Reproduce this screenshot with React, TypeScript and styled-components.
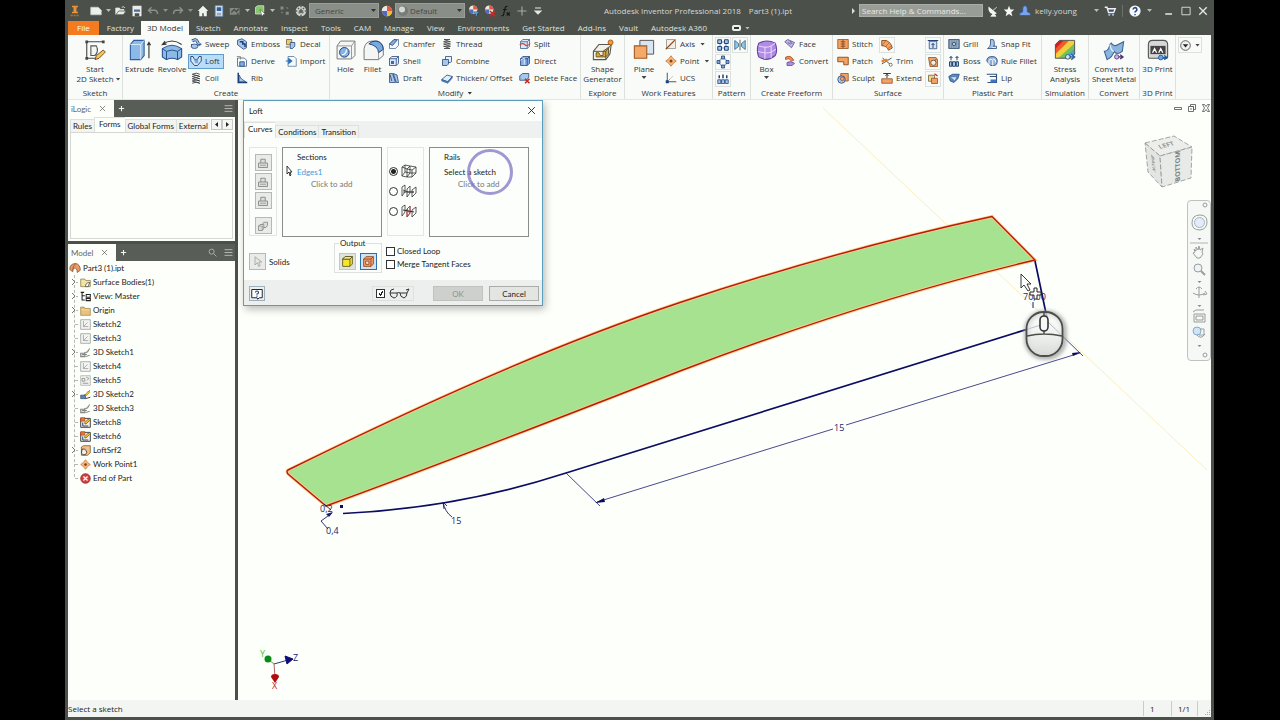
import React from "react";
import styled, { createGlobalStyle, css } from "styled-components";

const chrome = "#4c504b";
const paper = "#fcfffa";
const line = "#dde1de";
const ui = '"Open Sans", "Noto Sans", sans-serif';
const tahoma = 'Lato, "DejaVu Sans Condensed", sans-serif';
const B = "#1f3f78";
const LB = "#a6c6ec";
const O = "#f3a264";
const DO = "#8c4a1c";

const Global = createGlobalStyle`
  *, *::before, *::after { box-sizing: border-box; }
  body { margin: 0; background: #000; font: 8px/10px ${ui}; color: #333; }
  button, input, select { font: inherit; color: inherit; margin: 0; padding: 0; border: 0; background: none; border-radius: 0; }
  h1, h2, ul, fieldset, legend, p { margin: 0; padding: 0; font: inherit; border: 0; list-style: none; }
  svg { display: block; flex: none; overflow: visible; }
`;

/* ---------- icons ---------- */

const box3d = (f: string, s: string) => (
  <>
    <path d="M2 5 5 2h9v9l-3 3H2z" fill={f} stroke={s} />
    <path d="M2 5h9v9M11 5l3-3" fill="none" stroke={s} />
  </>
);

const glyphs: Record<string, React.ReactNode> = {
  logo: <><path d="M4 1h8v2H10v6h2v2H4V9h2V3H4z" fill="#e8923a" /><path d="M2 14h12" stroke="#c4691c" strokeWidth="2" strokeDasharray="3 1" /></>,
  newFile: <path d="M1 3h10l4 4v6H1z" fill="#eef0ee" stroke="#c9ccc9" />,
  open: <><path d="M1 13V4h5l1 2h5v2" fill="#e8ebe8" stroke="#e8ebe8" /><path d="M1 13 5 8h10l-4 5z" fill="#e8ebe8" stroke="#4c504b" /><path d="M9 3q3-2 4 1" stroke="#fff" fill="none" /></>,
  save: <><path d="M2 1h12v14H2z" fill="#e9ecea" /><path d="M4 6h8v3H4z" fill="#4d6c97" /><path d="M5 11h6v4H5z" fill="#4c504b" /></>,
  undo: <path d="M6 3 2 7l4 4M2 7h8q4 0 4 5" fill="none" stroke="#8b8f8a" strokeWidth="2" />,
  redo: <path d="M10 3l4 4-4 4M14 7H6q-4 0-4 5" fill="none" stroke="#8b8f8a" strokeWidth="2" />,
  home: <path d="M8 1 15 8h-2v7H9v-4H7v4H3V8H1z" fill="#f1f3f1" />,
  sheet: <><path d="M3 1h10v14H3z" fill="#dfe9f4" stroke="#6f96c4" /><path d="M5 3h6v5H5z" fill="#2f5f9e" /><path d="M5 11h6M5 13h6" stroke="#6b7b8b" /></>,
  team: <><path d="M1 4h13v9H1z" fill="#838883" /><path d="m3 10 4-4 3 3 3-4M10 14l3-3" stroke="#4c504b" strokeWidth="2" fill="none" /></>,
  pick: <><path d="M2 3l3-2h8v8l-2 3H2z" fill="#86c66c" stroke="#d9ecd2" /><path d="m8 6 7 6-3 1-1 3z" fill="#fff" stroke="#333" strokeWidth=".6" /></>,
  dots: <><path d="M2 2h4v4H2zM9 9h4v4H9z" fill="#858a85" /><path d="M3 9l2 2M10 3l2 2" stroke="#747974" strokeWidth="2" /></>,
  ball: <><circle cx="8" cy="8" r="7" fill="#ced2ce" /><path d="M4 4l8 8M12 4l-8 8M8 1v14M1 8h14" stroke="#5a5e5a" strokeDasharray="2 2" strokeWidth="2" /></>,
  wheel: <><circle cx="8" cy="8" r="7" fill="#f4d44a" /><path d="M8 8 1 8a7 7 0 0 1 7-7z" fill="#e8e8ea" /><path d="M8 8V1a7 7 0 0 1 7 7z" fill="#e2564c" /><path d="M8 8H1a7 7 0 0 0 7 7z" fill="#5068c8" /><path d="M8 8v7a7 7 0 0 0 7-7z" fill="#ecc03c" /></>,
  wheelT: <><circle cx="7" cy="6" r="5.5" fill="#f1ead0" /><path d="M7 6V.5A5.5 5.5 0 0 1 12.500 6z" fill="#e2564c" /><path d="M7 6H1.500a5.500 5.500 0 0 0 5.500 5.500z" fill="#5068c8" /><path d="M7 9h8l-3 3v3h-2v-3z" fill="#5aa7e4" stroke="#234" strokeWidth=".5" /></>,
  wheelX: <><circle cx="7" cy="6" r="5.5" fill="#f1ead0" /><path d="M7 6V.5A5.5 5.5 0 0 1 12.500 6z" fill="#e2564c" /><path d="M7 6H1.500a5.500 5.500 0 0 0 5.500 5.500z" fill="#5068c8" /><path d="m8 8 7 7M15 8l-7 7" stroke="#d32626" strokeWidth="2.200" /></>,
  fx: <path d="M10 2Q7 1 6.500 5L5 12q-.5 3-3 2M4 6h5M9 10l4 4M13 10l-4 4" fill="none" stroke="#151515" strokeWidth="1.500" />,
  plus: <path d="M8 2v12M2 8h12" stroke="#a8aca8" strokeWidth="1.400" />,
  more: <path d="M4 4h8M4 8h8l-4 4z" stroke="#e6e8e6" fill="#e6e8e6" strokeWidth="1.400" />,
  dish: <><path d="M2 2q-1 8 5 10 4 1 6-1z" fill="#f3f5f3" /><path d="M8 7l5-4M5 15h7l-3-4z" fill="#f3f5f3" stroke="#f3f5f3" /></>,
  star: <path d="m8 1 2 5h5l-4 3.500 1.500 5.500L8 12l-4.500 3L5 9.500 1 6h5z" fill="#f5f7f5" />,
  user: <><path d="M5 9V5a3 4 0 0 1 6 0v4l4 2v3H1v-3z" fill="#7aa3ea" stroke="#31559b" /></>,
  cart: <><path d="M1 3h3l2 7h7l2-5H5" fill="none" stroke="#eef" strokeWidth="1.800" /><circle cx="7" cy="13" r="1.500" fill="#9bc" /><circle cx="12" cy="13" r="1.500" fill="#9bc" /></>,
  help: <><circle cx="8" cy="8" r="7.500" fill="#f5f8fb" /><path d="M5.500 6a2.500 2.500 0 1 1 3.500 2.300q-1 .4-1 1.700M8 12v1.500" stroke="#20427e" strokeWidth="2" fill="none" /></>,
  min: <path d="M3 12h9" stroke="#e6e8e6" strokeWidth="2" />,
  max: <path d="M2.500 3h11v10h-11z" stroke="#d4d7d4" fill="none" strokeWidth="1.300" />,
  close: <path d="m3 3 10 10M13 3 3 13" stroke="#e6e8e6" strokeWidth="1.800" />,
  sketch2d: <><path d="M2 2h12M2 2v12M2 14h8" stroke="#444" strokeWidth=".8" fill="none" /><path d="M1 1h2v2H1zM13 1h2v2h-2zM1 13h2v2H1z" fill="#444" /><path d="M5 12V5h4q2 4-1 7z" fill="#f3f5f5" stroke="#555" strokeWidth=".8" /><path d="m8 15 1-3 5-4 1.500 1.500L11 14z" fill="#f5c45d" stroke="#77501d" strokeWidth=".7" /></>,
  extrude: <><path d="M1 4 3.500 1H11v11l-2.500 3H1z" fill="#8db9e6" stroke="#2f5e9c" strokeWidth=".8" /><path d="M1 4h7.500v11M8.500 4 11 1" fill="none" stroke="#d9ebfb" strokeWidth=".7" /><path d="M14.500 14V3M13.300 4.500l1.200-2 1.200 2" stroke="#333" strokeWidth=".8" fill="none" /></>,
  revolve: <><path d="M1 7q7-5 14 0v6l-3 2q-4-2-8 0l-3-2z" fill="#8db9e6" stroke="#28528e" strokeWidth=".8" /><path d="M1 7l3 2q4-2 8 0l3-2M4 9v6M12 9v6" fill="none" stroke="#28528e" strokeWidth=".7" /><path d="M1 4q7-5 14 0M3 1.500 1 4l3-.3" stroke="#333" fill="none" strokeWidth=".8" /></>,
  sweep: <><path d="M3 4q5-4 7 1t4 2" fill="none" stroke={B} strokeWidth="4" /><path d="M3 4q5-4 7 1t4 2" fill="none" stroke={LB} strokeWidth="2" /><ellipse cx="6" cy="11" rx="4.500" ry="3" fill={LB} stroke={B} /><path d="M2 8v3M10 10l4-2" stroke={B} /></>,
  loft: <><path d="M1 2h3l2 4h4l2-4h3v6l-5 6H6L1 8z" fill="#d8e9f9" stroke={B} strokeWidth="1.200" /><path d="M5 6h6v5H7z" fill="#7ba8da" /></>,
  coil: <path d="M3 3q6-3 10 0M3 6q6-3 10 0M3 9q6-3 10 0M3 12q6-3 10 0M3 15q6-3 10 0M3 3l10 3M3 6l10 3M3 9l10 3M3 12l10 3" stroke="#333" fill="none" strokeWidth="1.100" />,
  emboss: <><path d="M2 3l6-2 6 4v8l-4 2-8-6z" fill={LB} stroke={B} /><path d="M5 5h4v3h3v4" stroke={B} strokeWidth="2" fill="none" /></>,
  derive: <><path d="M2 4h9l3 3v8H2z" fill="#f7fafc" stroke="#35557f" /><path d="M5 9h6v6H5z" fill="#7fadde" stroke={B} /><path d="M1 2h5v4" stroke="#777" fill="none" /></>,
  rib: <><path d="M3 1v13h12" stroke={B} strokeWidth="2" fill="none" /><path d="M4 4q2 6 9 9H4z" fill={LB} stroke={B} /></>,
  decal: <><path d="M2 2h7v7H2z" fill="#eecb78" stroke="#6c5a2a" /><path d="M7 6h6v5l-3 3H7z" fill={LB} stroke={B} /><path d="M1 12h5" stroke="#333" /></>,
  import: <><path d="M4 2h8l3 3v10H4z" fill="#f7fbfd" stroke="#4b7094" /><path d="M1 8h6M5 5l4 3-4 3z" fill="#2b6fb5" stroke="#2b6fb5" strokeWidth="1.500" /></>,
  hole: <><path d="M1.500 5 4 1.500h10.500V12L12 14.500H1.500z" fill="#f4f5f4" stroke="#777" strokeWidth=".7" /><path d="M1.500 5H12v9.500M12 5l2.500-3.500" fill="none" stroke="#888" strokeWidth=".6" /><circle cx="6.800" cy="9.700" r="3.500" fill="#84b3e4" stroke={B} strokeWidth=".7" /><path d="M5 11.500q3 0 3.500-4" stroke="#fff" fill="none" strokeWidth=".8" /></>,
  fillet: <><path d="M1.500 15V7q1-5.500 6-5.500h4q4 2 4 6V12L12 15z" fill="#f4f5f4" stroke="#777" strokeWidth=".7" /><path d="M5 3.500q2-2 5-2 5 .5 5.500 6L12 10Q12 5 5 3.500z" fill="#78aae0" stroke={B} strokeWidth=".7" /><path d="M12 10v5" stroke="#888" strokeWidth=".6" /></>,
  chamfer: <><path d="M2 14V8l6-6h6v8l-4 4z" fill="#f4f7fa" stroke="#47678f" /><path d="M2 8l6-6 4 1-6 7z" fill="#7fadde" stroke={B} /></>,
  shell: <>{box3d("#dceafa", B)}<path d="M4 8h4v4H4z" fill="#3d6aa6" /></>,
  draft: <><path d="M2 2h4l4 12H2zM7 2l5 2 2 10h-3z" fill={LB} stroke={B} /><path d="M3 4l2 8" stroke="#333" /></>,
  thread: <path d="M4 2h8M3 5h10M3 8h10M3 11h10M4 14h8M4 2l8 3M4 5l8 3M4 8l8 3M4 11l8 3" stroke="#444" strokeWidth="1.200" />,
  combine: <><path d="M6 2h8v7l-2 1H6z" fill="#e9f2fb" stroke={B} /><path d="M2 6h8v6l-2 2H2z" fill={LB} stroke={B} /></>,
  thicken: <><path d="M1 10 8 4l7 2-6 7z" fill="#def" stroke={B} /><path d="M1 10v2l8 3 6-7V6l-6 7z" fill="#4d93d6" stroke={B} strokeWidth=".7" /></>,
  split: <>{box3d("#dce8f5", "#2f5b92")}<path d="M1 9q4-3 7 0t7-2" fill="none" stroke="#cf4a3c" strokeWidth="1.500" /></>,
  direct: <>{box3d("#7fb0e6", B)}<path d="M2 7l5-3v9" stroke="#fff" fill="none" /></>,
  delface: <><path d="M1 5 5 2h8v5l-3 4H1z" fill={LB} stroke={B} /><path d="m8 9 6 6M14 9l-6 6" stroke="#c6261f" strokeWidth="2" /></>,
  shapegen: <><path d="M1 9 5 4h9l-1 7-3 4H1z" fill="#f3f1e5" stroke="#555" strokeWidth=".8" /><path d="M3 13V10h2l1 2h2v-3l4-3v5l-2 2z" fill="#d9a93d" stroke="#6b5720" strokeWidth=".7" /><path d="M1 9h9l4-5M10 9v6" stroke="#555" fill="none" strokeWidth=".7" /><circle cx="13.500" cy="2.500" r="1.800" fill="#f59b34" stroke="#a04f10" strokeWidth=".6" /></>,
  plane: <><path d="M5 1h10v10H5z" fill="#d8e4ef" stroke="#555" strokeWidth=".7" /><path d="M1 5h9v9H1z" fill="#f3a967" stroke="#a45a20" strokeWidth=".8" /></>,
  axis: <><path d="M2 2h12v12H2z" fill="#f5efe8" stroke="#888" /><path d="M1 15 13 3" stroke={DO} strokeWidth="1.500" /></>,
  point: <><path d="m8 1 3 4 4 3-4 3-3 4-3-4-4-3 4-3z" fill="#f6b880" stroke="#c46a25" /><circle cx="8" cy="8" r="2" fill="#8e3f10" /></>,
  ucs: <><path d="M3 1v12h12" stroke="#444" fill="none" strokeWidth="1.200" /><path d="M3 13l7-7" stroke="#777" strokeDasharray="2 1" /><path d="M1 11h4v4H1z" fill={B} /></>,
  rect: <><path d="M4 4h8v8H4z" fill="none" stroke="#5279af" /><path d="M1 1h5v5H1zM10 1h5v5h-5zM1 10h5v5H1zM10 10h5v5h-5z" fill="#a6c6ec" stroke={B} strokeWidth="1.300" /></>,
  mirror: <><path d="M1 2l5 4v4l-5 4zM15 2l-5 4v4l5 4z" fill="#8fcbe6" stroke="#33597c" /><path d="M8 1v14" stroke="#333" /></>,
  circ: <><circle cx="8" cy="8" r="5" fill="none" stroke="#5279af" /><path d="M6 0h4v4H6zM6 12h4v4H6zM0 6h4v4H0zM12 6h4v4h-4z" fill="#77a5d9" stroke={B} /></>,
  skpat: <><path d="M1 9h4v5H1zM6 9h4v5H6zM11 9h4v5h-4z" fill={LB} stroke={B} /><path d="M3 7V3M8 7V2M13 7V3" stroke={B} strokeWidth="2" /></>,
  freebox: <><path d="M2 3q6-3 12 0 2 5 0 9-6 5-12 1-2-5 0-10z" fill="#b08ce4" stroke="#6a44a4" strokeWidth=".8" /><path d="M2 5q6 2 9 0l3-2M11 5v9M6.500 5.500v9M1.500 9q6 2 9.500.5l3.500-2" stroke="#ecdcff" fill="none" strokeWidth=".7" /></>,
  face: <><path d="m1 5 4-3 9 4-4 7z" fill="#c8b2ea" stroke="#494c86" /><path d="m5 6 4 2M8 4l3 4" stroke="#494c86" /></>,
  convert: <><path d="M2 3q7-4 11 4l-3 1Q7 3 2 6z" fill="#f08a52" stroke="#a2471c" /><path d="M4 10q5-3 10 1l-3 3H4z" fill="#b08ce4" stroke="#5c4392" /></>,
  stitch: <><path d="M1 2h14v12H1z" fill={O} stroke={DO} /><path d="M8 2v12M5 5h6M5 8h6M5 11h6" stroke={DO} strokeWidth="1.200" /></>,
  patch: <path d="M1 3h14v10H9V9H1z" fill={O} stroke={DO} strokeWidth="1.200" />,
  sculpt: <><path d="M5 2h10v10H5z" fill={O} stroke={DO} /><circle cx="6" cy="10" r="5" fill={LB} stroke={B} /><circle cx="7" cy="9" r="2.500" fill={O} stroke={DO} /></>,
  ruled: <><path d="M1 2h6q7 3 8 10l-5 3Q8 9 1 9z" fill={O} stroke={DO} strokeWidth="1.200" /><path d="M1 9 7 2M6 10l5-5M9 13l5-4" stroke={DO} strokeWidth=".7" /></>,
  trim: <><path d="M1 12 14 4M2 4l11 9" stroke="#555" strokeWidth="1.300" /><path d="M1 9q5-4 8-1" stroke="#e28432" strokeWidth="3" fill="none" /><circle cx="13" cy="13" r="2" stroke="#555" fill="#fff" /></>,
  extend: <><path d="M1 9h14v6H1z" fill={O} stroke={DO} /><path d="M3 2h10M8 8V3M6 5l2-2 2 2" stroke="#333" fill="none" strokeWidth="1.300" /></>,
  rep: <><path d="M3 3h10v10H3z" fill="#d6e5f3" stroke={B} /><path d="M1 2h14M8 12V6M6 8l2-2 2 2" stroke={B} strokeWidth="1.300" fill="none" /></>,
  repair: <><path d="M2 2h10l2 3v9H4z" fill={O} stroke={DO} /><circle cx="8.500" cy="9" r="3.500" fill="#f7ece0" stroke="#444" /><path d="M10 6l3-2" stroke="#444" /></>,
  copyobj: <><path d="M2 3h8v8H2z" fill="#edd69a" stroke="#6c5a2a" /><path d="M6 7h8v7H6z" fill={O} stroke={DO} /><path d="m10 1 4 3" stroke="#c33" strokeWidth="2" /></>,
  grill: <><path d="M1 2h14v12H1z" fill="#7690ad" stroke="#2f4764" /><path d="M3 4h10v8H3z" fill="none" stroke="#d2e2f2" strokeDasharray="1.500 1.500" /><circle cx="8" cy="8" r="2" fill="#f0f5fa" stroke="#234" /></>,
  boss: <path d="M2 15V9h3v6zM11 15V9h3v6zM6 15V9h4v6zM4 7V2M2 4l2-2 2 2M12 7V2M10 4l2-2 2 2" fill={LB} stroke="#26446f" strokeWidth="1.300" />,
  rest: <><path d="M1 6 6 3h9l-2 6-5 5-5-2z" fill="#5b88bd" stroke={B} /><path d="M4 7h7l-2 4z" fill="#d9e8f7" /></>,
  snap: <><path d="M6 2q5-1 5 3v6q0 3-3 3H2q4-2 4-6z" fill={LB} stroke={B} /><path d="M9 11h5v3H7" fill="#dcebfa" stroke={B} /></>,
  rfillet: <><path d="M1 8q0-6 7-6t7 6-5 6H6Z" fill="#8eaed4" stroke={B} /><path d="M4 13V7q2-3 5 0v7M9 5q4 0 4 5" stroke="#fff" fill="none" strokeWidth="1.300" /></>,
  lip: <><path d="M1 3h13v3H5M14 6v8H2" fill="none" stroke="#334f7a" strokeWidth="1.500" /><path d="M6 10h8v4H6z" fill="#3e76c0" /></>,
  stress: <><path d="M1 4 4 1h11v10l-3 3H1z" fill="#f2cf3b" /><path d="M6 14 15 5v6l-3 3z" fill="#4aa2d8" /><path d="M4 1h7L1 11V4z" fill="#ee5a2c" /><path d="M1 4 4 1h3L1 7z" fill="#cf2020" /><path d="M3 14 15 3v4l-8 7z" fill="#6cc45a" /><path d="M1 4 4 1h11v10l-3 3H1z" fill="none" stroke="#555" strokeWidth=".7" /><path d="M9 13h5M12.500 11l2.500 2-2.500 2" stroke="#2d62a4" strokeWidth="1" fill="#fff" /><circle cx="10" cy="13" r="1.700" fill="#cfe2f5" stroke="#2d4c7a" strokeWidth=".6" /></>,
  sheetm: <><path d="M1 9q3 0 4-5l1-1q2 3 5 1l4-2-1 7q-4 3-6 0-1 4-5 6z" fill="#8db4dd" stroke="#3c6693" strokeWidth=".8" /><path d="M5 4q1 5 3 5" stroke="#dceafa" fill="none" /><path d="M9 13h5M12.500 11.500l2 1.500-2 1.500" stroke="#4c3375" fill="none" /><circle cx="10" cy="13" r="1.600" fill="#cdb3ec" stroke="#4c3375" strokeWidth=".6" /></>,
  print3d: <><path d="M1 4q0-3 3-3h8q3 0 3 3v9q0 1-1 1H2q-1 0-1-1z" fill="#d6d8d7" stroke="#555" strokeWidth=".8" /><path d="M2.500 5h11v6h-11z" fill="#444" /><path d="m4 10 1.500-3L7 10M8.500 10 10 7l1.500 3" stroke="#fff" fill="none" strokeWidth=".9" /><path d="M9 13.500h5M12.500 12l2 1.500-2 1.500" stroke="#1f5ea4" fill="none" /><circle cx="10" cy="13.500" r="1.700" fill="#5ea9ea" stroke="#1f4e8a" strokeWidth=".6" /></>,
  drop: <><circle cx="8" cy="8" r="7" fill="#f0f2f0" stroke="#444" strokeWidth="1.200" /><path d="M4 6h8l-4 5z" fill="#222" /></>,
  part: <><path d="M1 10q0-8 8-8 6 1 6 9l-4 3q0-6-4-6-2 1-2 5z" fill="#e99a66" stroke="#82502f" /><path d="M9 2q-4 3-4 9" stroke="#82502f" fill="none" /></>,
  surf: <><path d="M1 3h6l1 2h7v9H1z" fill="#f1e4a4" stroke="#7d7440" /><path d="M8 14q0-6 6-6l-2 6z" fill="#fff" stroke="#333" /></>,
  view: <path d="M1 2h5M3 2v11h4M3 7h4M9 5h6v4H9zM9 11h6v3H9z" fill="#fff" stroke="#222" strokeWidth="1.500" />,
  folder: <><path d="M1 3h5l1 2h8v10H1z" fill="#e9c37e" stroke="#9d7a3e" /><path d="M2 7h12" stroke="#f9e4b8" /></>,
  sk: <><path d="M1 1h14v14H1z" fill="#f3f4f3" stroke="#8e928e" /><path d="M5 3v8h7M5 11l6-6" stroke="#8e928e" fill="none" /></>,
  skc: <><path d="M1 1h14v14H1z" fill="#f1f2f1" stroke="#a4a8a4" /><path d="M3 5h4v4H3zM9 3l4 2-3 3M4 12h8" stroke="#8e928e" fill="none" strokeWidth="1.300" /></>,
  s3: <path d="M1 9h6v5H1zM8 14l6-2M6 8q5 2 8-6M3 11h7" stroke="#858985" fill="#d9dbd9" strokeWidth="1.500" />,
  s3c: <><path d="M1 9h7v5H1z" fill="#5f86b4" stroke="#27466f" /><path d="M6 9q5 0 8-7M8 14l7-2" stroke="#333" fill="none" strokeWidth="1.300" /><path d="m7 9 5-6 2 2-5 5z" fill="#f3c32e" stroke="#7c5b10" strokeWidth=".6" /></>,
  skx: <><path d="M1 2h14v13H1z" fill="#f3efe6" stroke="#333" strokeWidth="1.300" /><path d="M1 1h6v5H1z" fill="#e07a3a" stroke="#b5431f" /><path d="M4 13V8M4 13h8" stroke="#2a4f80" strokeWidth="1.500" fill="none" /><path d="m7 8 5-5 2 2-5 5H7z" fill="#f0c33b" stroke="#6b4a12" /></>,
  loftsrf: <><path d="M2 3 5 1h10v10l-4 4H2z" fill="#f6bf86" stroke="#6e4524" /><path d="M3 6q4-1 6 2t-1 6q-4 1-6-2z" fill="#f3efe9" stroke="#333" strokeWidth="1.200" /></>,
  end: <><circle cx="8" cy="8" r="7" fill="#d43f3f" stroke="#7d1d1d" /><path d="m5 5 6 6M11 5l-6 6" stroke="#fff" strokeWidth="1.800" /></>,
  solid: <>{box3d("#f7e52c", "#565016")}<path d="M2 5 5 2h9l-3 3z" fill="#fdf9a6" stroke="#565016" /></>,
  surface: <>{box3d("#f2a06b", "#8c3f1c")}<path d="M4.500 7.500h4v4h-4z" fill="#fbe3d2" stroke="#8c3f1c" /></>,
  sec: <><path d="M2 14V8h12v6zM5 8V3h6v5" fill="#dcdedc" stroke="#8c8f8c" strokeWidth="1.300" /><path d="M4 11h8" stroke="#8c8f8c" /></>,
  multi: <><path d="m2 8 2-2h5v5l-2 3H2zM7 6l2-3h5v4l-2 3H9" fill="#dcdedc" stroke="#8c8f8c" strokeWidth="1.200" /><path d="M2 8h5v6" stroke="#8c8f8c" fill="none" /></>,
  arrow: <path d="M4 1v11l3-3 2 5 2-1-2-5h4z" fill="#e6e8e6" stroke="#999c99" />,
  search: <path d="M10 10l5 5M6.500 11a4.500 4.500 0 1 0 0-9 4.500 4.500 0 0 0 0 9z" stroke="#c4c7c4" fill="none" strokeWidth="1.300" />,
  menu: <path d="M1 3h14M1 8h14M1 13h14" stroke="#c4c7c4" strokeWidth="1.500" />,
  add: <path d="M8 2v12M2 8h12" stroke="#f2f4f2" strokeWidth="2.500" />,
  x: <path d="m2 2 12 12M14 2 2 14" stroke="#555" strokeWidth="1.500" />,
  dx: <path d="m2 2 12 12M14 2 2 14" stroke="#222" strokeWidth="1.600" />,
  helpbox: <><path d="M1 2h14v11h-4l-2 2-1-2H1z" fill="#fff" stroke="#222" strokeWidth="1.300" /><path d="M6 6q0-2 2-2t2 2-2 2v1M8 10v1.500" stroke={B} fill="none" strokeWidth="1.500" /></>,
  wmin: <path d="M1 7h14v4H1z" fill="#fff" stroke="#444" strokeWidth="1.500" />,
  wrest: <><path d="M5 1h10v10h-4V5H5z" fill="#fff" stroke="#444" strokeWidth="1.500" /><path d="M1 5h10v10H1zM6 8v4" fill="#fff" stroke="#444" strokeWidth="1.500" /></>,
  wclose: <path d="M1 1h4l3 4 3-4h4l-4 7 4 7h-4l-3-4-3 4H1l4-7z" fill="#fff" stroke="#444" strokeWidth="1.500" />,
};

const Icon = ({ n, s = 12 }: { n: string; s?: number }) => (
  <svg width={s} height={s} viewBox="0 0 16 16" aria-hidden="true">{glyphs[n]}</svg>
);

/* ---------- frame ---------- */

const Page = styled.div`
  min-height: 100vh;
  padding: 0 66px 0 65px;
  display: grid;
`;
const AppWindow = styled.div`
  display: grid;
  grid-template-rows: 21px 14px 65px 1fr 17px;
  grid-template-columns: minmax(0, 1fr);
  background: ${chrome};
  border: 3px solid ${chrome};
  border-top: 0;
`;
const TitleBar = styled.header`
  display: flex;
  align-items: center;
  gap: 2px;
  padding-right: 2px;
  color: #d5d8d5;
  white-space: nowrap;
`;
const ToolGroup = styled.div<{ $gap?: number; $start?: number }>`
  display: flex;
  align-items: center;
  gap: ${(p) => p.$gap ?? 4}px;
  padding-left: ${(p) => p.$start ?? 0}px;
`;
const PlainButton = styled.button`
  display: flex;
  align-items: center;
  justify-content: center;
`;
const Caret = styled.span<{ $tone?: string }>`
  width: 5px;
  height: 3px;
  flex: none;
  background: ${(p) => p.$tone ?? "#b9bcb9"};
  clip-path: polygon(0 0, 100% 0, 50% 100%);
`;
const BarSelect = styled.select<{ $inset?: number }>`
  appearance: none;
  width: 70px;
  height: 15px;
  padding-left: ${(p) => p.$inset ?? 5}px;
  background: #8a8e89;
  border: 1px solid #9a9e99;
  color: #454945;
`;
const SelectWrap = styled.label`
  display: grid;
  align-items: center;
  > * { grid-area: 1 / 1; }
  > ${Caret} { justify-self: end; margin-right: 3px; }
  > svg { margin-left: 3px; }
`;
const Title = styled.h1`
  flex: 1;
  display: flex;
  justify-content: center;
  gap: 8px;
  min-width: 0;
`;
const SearchBox = styled.input`
  width: 124px;
  height: 13px;
  padding: 0 2px;
  background: #999d98;
  border: 1px solid #a9ada8;
  &::placeholder { color: #e4e6e4; opacity: 1; }
`;
const UserName = styled.span`
  width: 55px;
`;
const Rule = styled.span`
  width: 1px;
  height: 12px;
  background: #6e726d;
`;

const TabBar = styled.nav`
  display: flex;
  align-items: stretch;
  gap: 1px;
  color: #dfe1df;
`;
const RibbonTab = styled.button<{ $kind?: "file" | "active" }>`
  padding: 0 6px 1px;
  line-height: 13px;
  white-space: nowrap;
  ${(p) => p.$kind === "file" && css`background: #f47b20; color: #fff; padding: 0 9px 1px; margin-right: 1px;`}
  ${(p) => p.$kind === "active" && css`background: #fafcfa; color: #333;`}
`;
const Pill = styled.span`
  width: 9px;
  height: 6px;
  border: 2px solid #eef0ee;
  border-radius: 2px;
  background: #333;
`;

const Ribbon = styled.div`
  display: flex;
  background: #f8fbf8;
  border-bottom: 1px solid #e3e7e4;
  overflow: hidden;
  white-space: nowrap;
`;
const Panel = styled.section<{ $w: number; $start?: number }>`
  flex: 0 0 ${(p) => p.$w}px;
  display: grid;
  grid-template-rows: 51px 12px;
  border-right: 1px solid ${line};
  padding-top: 1px;
  > div { padding-left: ${(p) => p.$start ?? 0}px; }
`;
const PanelBody = styled.div`
  display: flex;
`;
const PanelTitle = styled.h2`
  display: flex;
  align-items: center;
  justify-content: center;
  gap: 4px;
  line-height: 12px;
`;
const BigButton = styled.button<{ $w: number }>`
  width: ${(p) => p.$w}px;
  display: flex;
  flex-direction: column;
  align-items: center;
  padding-top: 3px;
  svg { margin-bottom: 3px; }
  > ${Caret} { margin-top: 2px; }
`;
const SideCaretLine = styled.span`
  display: flex;
  align-items: center;
  gap: 2px;
  padding-left: 7px;
`;
const Column = styled.div<{ $w: number }>`
  width: ${(p) => p.$w}px;
  display: grid;
  grid-template-rows: repeat(3, 17px);
  justify-items: start;
  align-items: center;
`;
const SmallButton = styled.button<{ $on?: boolean }>`
  height: 15px;
  display: flex;
  align-items: center;
  gap: 3px;
  padding: 0 2px 1px;
  ${(p) => p.$on && css`background: #b9dcf7; box-shadow: 0 0 0 1px #5f9dcd inset; padding-right: 4px;`}
  ${Caret} { margin-left: 2px; }
`;
const IconButton = styled.button<{ $w?: number }>`
  width: ${(p) => p.$w ?? 16}px;
  height: 16px;
  display: flex;
  align-items: center;
  justify-content: center;
  gap: 4px;
  border: 1px solid ${line};
`;
const IconGrid = styled.div`
  display: grid;
  grid-template: repeat(3, 17px) / repeat(2, 17px);
  align-items: center;
`;
const RibbonEnd = styled.div`
  padding: 2px 0 0 2px;
`;

/* ---------- body ---------- */

const Workspace = styled.main`
  display: grid;
  grid-template-columns: 170px minmax(0, 1fr);
`;
const Sidebar = styled.aside`
  border-right: 3px solid ${chrome};
  background: ${paper};
  font-family: ${tahoma};
  color: #222;
  display: flex;
  flex-direction: column;
`;
const PaneHeader = styled.header`
  height: 17px;
  flex: none;
  display: flex;
  align-items: center;
  gap: 4px;
  padding-right: 2px;
  background: #595d58;
`;
const PaneTab = styled.button`
  height: 17px;
  display: flex;
  align-items: center;
  gap: 8px;
  padding: 0 8px 0 3px;
  background: ${paper};
  color: #666;
`;
const Spacer = styled.span`
  flex: 1;
`;
const LogicPane = styled.section`
  height: 124px;
  display: grid;
  grid-template-rows: 15px 1fr;
  padding: 0 2px 2px;
`;
const LogicHead = styled.div`
  display: flex;
  min-width: 0;
`;
const LogicTabs = styled.div`
  flex: 1;
  display: flex;
  align-items: flex-end;
  white-space: nowrap;
`;
const LogicTab = styled.button<{ $on?: boolean }>`
  flex: none;
  height: ${(p) => (p.$on ? 15 : 13)}px;
  padding: 0 2px;
  border: 1px solid #dcdfdc;
  border-width: 1px 0 0 1px;
  background: ${(p) => (p.$on ? paper : "#f2f4f2")};
  ${(p) => p.$on && css`padding: 0 4px 3px;`}
`;
const LogicArrow = styled.button`
  width: 11px;
  height: 11px;
  flex: none;
  align-self: center;
  border: 1px solid #c5c8c5;
  background: #f4f6f4;
  display: grid;
  place-items: center;
`;
const LogicBody = styled.div`
  border: 1px solid #d5d8d5;
`;
const Divider = styled.div`
  height: 3px;
  background: ${chrome};
`;
const Tree = styled.ul`
  position: relative;
  &::before {
    content: "";
    position: absolute;
    left: 6px;
    top: 14px;
    height: 202px;
    border-left: 1px dashed #b4b8b4;
  }
`;
const TreeRow = styled.li<{ $root?: boolean }>`
  height: 14px;
  display: flex;
  align-items: center;
  gap: 2px;
  padding-left: ${(p) => (p.$root ? 1 : 4)}px;
`;
const Twist = styled.span`
  width: 6px;
  height: 8px;
  display: flex;
  align-items: center;
  position: relative;
  z-index: 1;
  &::after {
    content: "";
    width: 3px;
    margin-left: auto;
    border-top: 1px dashed #b4b8b4;
  }
`;

const Viewport = styled.section`
  position: relative;
  background: ${paper};
  overflow: hidden;
`;
const Scene = styled.svg`
  width: 100%;
  height: 100%;
  text { font-family: ${ui}; font-size: 9px; fill: #1c1c6e; }
`;
const DocButtons = styled.div`
  position: absolute;
  top: 4px;
  right: 1px;
  display: flex;
  gap: 6px;
`;
const NavBar = styled.div`
  position: absolute;
  top: 100px;
  right: 0;
  width: 24px;
  height: 161px;
  border: 1px solid #bfc3bf;
  border-radius: 4px;
  background: #f5f8f5;
`;

/* ---------- dialog ---------- */

const Dialog = styled.section`
  position: absolute;
  left: 5px;
  top: 0;
  width: 300px;
  border: 1px solid #5b9dbd;
  background: #fbfefb;
  box-shadow: 2px 3px 8px rgba(0, 0, 0, 0.28);
  font-family: ${tahoma};
  color: #222;
`;
const DialogTitle = styled.header`
  height: 20px;
  display: flex;
  align-items: center;
  justify-content: space-between;
  padding: 0 6px 1px 5px;
`;
const DialogTabs = styled.div`
  height: 17px;
  display: flex;
  align-items: flex-end;
  background: #eef1ef;
`;
const DialogTab = styled.button<{ $on?: boolean }>`
  height: ${(p) => (p.$on ? 16 : 13)}px;
  padding: 0 2px;
  border: 1px solid #dde0dd;
  border-width: 1px 0 0 1px;
  background: ${(p) => (p.$on ? "#fbfefb" : "#f0f3f0")};
  &:last-child { border-right-width: 1px; }
  ${(p) => p.$on && css`padding: 0 3px 3px;`}
`;
const Curves = styled.div`
  display: grid;
  grid-template-columns: 28px 100px 37px 100px;
  gap: 5px;
  padding: 9px 5px 0;
`;
const ModeList = styled.div`
  height: 89px;
  border: 1px solid #e3e6e3;
  display: flex;
  flex-direction: column;
  align-items: center;
  gap: 2px;
  padding-top: 6px;
  > button:last-child { margin-top: 6px; }
`;
const ModeButton = styled.button`
  width: 17px;
  height: 17px;
  display: grid;
  place-items: center;
  background: #e8ebe8;
  border: 1px solid #b5b8b5;
`;
const ListBox = styled.div`
  position: relative;
  height: 90px;
  border: 1px solid #8a8d8a;
  padding: 4px 0 0 14px;
`;
const ListHead = styled.p`
  height: 15px;
`;
const ListItem = styled.p<{ $link?: boolean }>`
  height: 12px;
  line-height: 10px;
  color: ${(p) => (p.$link ? "#3f9be0" : "#222")};
`;
const ListHint = styled.p`
  padding-left: 14px;
  color: #777;
`;
const ClickRing = styled.span`
  position: absolute;
  left: 37px;
  top: 1px;
  width: 46px;
  height: 46px;
  border: 3px solid rgba(128, 118, 196, 0.75);
  border-radius: 50%;
`;
const ListPointer = styled.svg`
  position: absolute;
  left: 3px;
  top: 17px;
`;
const RadioList = styled.div`
  height: 89px;
  border: 1px solid #e3e6e3;
  display: flex;
  flex-direction: column;
  gap: 6px;
  padding: 16px 0 0 1px;
`;
const RadioRow = styled.label`
  height: 14px;
  display: flex;
  align-items: center;
  gap: 3px;
`;
const Radio = styled.input`
  appearance: none;
  width: 9px;
  height: 9px;
  border: 1px solid #333;
  border-radius: 50%;
  background: #fff;
  &:checked { background: radial-gradient(circle, #222 0 2px, #fff 3px); }
`;
const Options = styled.div`
  display: flex;
  align-items: flex-start;
  height: 43px;
  padding: 4px 5px 0;
`;
const Solids = styled.label`
  width: 85px;
  display: flex;
  align-items: center;
  gap: 3px;
  padding-top: 12px;
`;
const Output = styled.fieldset`
  width: 48px;
  height: 30px;
  min-width: 0;
  position: relative;
  border: 1px solid #dde0dd;
  display: flex;
  align-items: flex-end;
  justify-content: center;
  gap: 4px;
  padding-bottom: 2px;
  margin-top: 2px;
`;
const OutputTitle = styled.legend`
  position: absolute;
  left: 4px;
  top: -6px;
  padding: 0 1px;
  background: #fbfefb;
`;
const OutputButton = styled.button<{ $on?: boolean }>`
  width: 17px;
  height: 17px;
  display: grid;
  place-items: center;
  background: ${(p) => (p.$on ? "#cfe3f4" : "#e0e3e0")};
  border: 1px solid ${(p) => (p.$on ? "#2f6fa8" : "#c4c8c4")};
`;
const Checks = styled.div`
  padding: 5px 0 0 4px;
  display: grid;
  gap: 3px;
`;
const CheckRow = styled.label`
  height: 10px;
  display: flex;
  align-items: center;
  gap: 2px;
`;
const Check = styled.input`
  appearance: none;
  width: 9px;
  height: 9px;
  border: 1px solid #333;
  background: #fff;
  &:checked {
    background: linear-gradient(#222, #222) 2px 3px / 1px 2px no-repeat,
      linear-gradient(#222, #222) 3px 4px / 1px 2px no-repeat,
      linear-gradient(#222, #222) 4px 2px / 1px 3px no-repeat,
      linear-gradient(#222, #222) 5px 1px / 1px 2px no-repeat, #fff;
  }
`;
const DialogFooter = styled.footer`
  height: 25px;
  display: flex;
  align-items: center;
  padding: 2px 3px 0 5px;
  background: #eceFed;
`;
const HelpButton = styled.button`
  width: 16px;
  height: 15px;
  display: grid;
  place-items: center;
  border: 1px solid #9fb0bd;
  margin-right: 107px;
`;
const Preview = styled.label`
  width: 42px;
  height: 15px;
  display: flex;
  align-items: center;
  gap: 4px;
  padding-left: 3px;
  border: 1px solid #dde0dd;
  margin-right: 19px;
`;
const DialogButton = styled.button`
  width: 50px;
  height: 15px;
  border: 1px solid #a9aca9;
  background: #e2e5e2;
  margin-right: 6px;
  &:last-child { margin-right: 0; }
  &:disabled { background: #cdd0cd; border-color: #bfc2bf; color: #8f928f; }
`;

const StatusBar = styled.footer`
  display: flex;
  align-items: center;
  background: #f2f5f2;
  color: #222;
`;
const StatusCell = styled.span<{ $w: number }>`
  width: ${(p) => p.$w}px;
  height: 15px;
  line-height: 15px;
  padding-left: 6px;
  border-left: 1px solid #c9ccc9;
`;
const GripCell = styled(StatusCell)`
  display: flex;
  align-items: flex-end;
  justify-content: flex-end;
`;

/* ---------- data ---------- */

type Item = { n: string; t: string; caret?: boolean; on?: boolean };
const Items = ({ w, items }: { w: number; items: Item[] }) => (
  <Column $w={w}>
    {items.map((i) => (
      <SmallButton key={i.t} $on={i.on}>
        <Icon n={i.n} />{i.t}{i.caret && <Caret $tone="#444" />}
      </SmallButton>
    ))}
  </Column>
);
const Big = ({ w, n, lines, caret }: { w: number; n: string; lines: string[]; caret?: boolean }) => (
  <BigButton $w={w}>
    <Icon n={n} s={22} />
    {lines.map((l) => <span key={l}>{l}</span>)}
    {caret && <Caret $tone="#444" />}
  </BigButton>
);
const Tool = ({ n, label }: { n: string; label: string }) => (
  <PlainButton aria-label={label}><Icon n={n} /></PlainButton>
);

const tabs = ["Sketch", "Annotate", "Inspect", "Tools", "CAM", "Manage", "View", "Environments", "Get Started", "Add-Ins", "Vault", "Autodesk A360"];

const tree: { n: string; t: string; more?: boolean }[] = [
  { n: "surf", t: "Surface Bodies(1)", more: true },
  { n: "view", t: "View: Master", more: true },
  { n: "folder", t: "Origin", more: true },
  { n: "sk", t: "Sketch2" },
  { n: "sk", t: "Sketch3" },
  { n: "s3", t: "3D Sketch1", more: true },
  { n: "sk", t: "Sketch4" },
  { n: "skc", t: "Sketch5" },
  { n: "s3c", t: "3D Sketch2", more: true },
  { n: "s3", t: "3D Sketch3" },
  { n: "skx", t: "Sketch8" },
  { n: "skx", t: "Sketch6" },
  { n: "loftsrf", t: "LoftSrf2", more: true },
  { n: "point", t: "Work Point1" },
  { n: "end", t: "End of Part" },
];

const RailGlyph = ({ kind }: { kind: number }) => (
  <svg width="16" height="14" viewBox="0 0 16 14" fill="none" stroke="#333" strokeWidth=".8">
    <path d="M1 3l3-2v7l-3 4zM6 5l3-3v7l-3 4zM11 6l4-3v6l-4 4z" />
    {kind === 0 && <path d="M4 1l5 1 6 1M1 3l5 2 5 1M4 8l5 1 6 0M1 12l5 1h5" />}
    {kind === 1 && <path d="M2 6l5 2 6 0M2 8l11 0" />}
    {kind === 2 && <path d="M6 5l3-3v7l-3 4zM6 5l3 5" stroke="#d23a3a" />}
    {kind === 2 && <path d="M2 6l11 2" strokeWidth="1.200" />}
  </svg>
);

/* ---------- viewport drawing ---------- */

const face = "M288 470C418 406 550 346 680 302.500 784 268 888 239 992 216.500L1035 260C917 288 796 327 680 371 562 417 444 463 326 506L288 474Q286 471 288 470z";

const Model = () => (
  <Scene viewBox="238 100 973 600" preserveAspectRatio="xMinYMin slice" fill="none">
    <path d="M823 108 1207 470" stroke="#fbe7b4" strokeWidth=".8" />
    <path d={face} fill="#a6e28f" stroke="#fbd08c" strokeWidth="3" />
    <path d={face} stroke="#b81a0c" strokeWidth="1.400" />
    <path d="M343 513.500C418 510 495 496 566 473L1028 329M1035 261 1047 318" stroke="#0c0c62" strokeWidth="1.700" />
    <path d="M1028 329 1047 323M566 473 600 506M1048 322 1083 356M597 502 833 429M846 425 1080 353" stroke="#34347e" strokeWidth=".9" />
    <path d="m595 503 9-5 1 4zM1081 352l-9 1 1 3z" fill="#0c0c62" />
    <path d="M443 502q2 10 9 15M443 502l1 7M443 502l4 4M328 529l-7-8 11-8M324 504l7 6" stroke="#1c1c6e" strokeWidth=".9" />
    <path d="m333 512-7 2 3 3z" fill="#1c1c6e" />
    <path d="M340 505h3v3h-3z" fill="#0c0c62" />
    <text x="834" y="431">15</text>
    <text x="451" y="524">15</text>
    <text x="320" y="512">0,2</text>
    <text x="326" y="534">0,4</text>
    <text x="1023" y="300">70,00</text>
    <path d="M1033 302v6" stroke="#1c1c6e" />
    <path d="M1021 274v14l3-3 4 6 2-1-3-6h4z" fill="#fff" stroke="#222" strokeWidth=".9" />
    <path d="M1034 288h3v4h4v3h-4v4h-3v-4h-4v-3h4z" fill="#fff" stroke="#222" />
    <defs>
      <linearGradient id="mouse" x1="0" y1="0" x2="0" y2="1">
        <stop offset="0" stopColor="#fff" stopOpacity=".5" />
        <stop offset="1" stopColor="#d8dad8" />
      </linearGradient>
      <filter id="soft" x="-30%" y="-30%" width="160%" height="160%"><feGaussianBlur stdDeviation="2" /></filter>
    </defs>
    <rect x="1027" y="313" width="37" height="44" rx="17" stroke="#999" strokeWidth="4" filter="url(#soft)" />
    <rect x="1026.500" y="312" width="36" height="44" rx="17" fill="url(#mouse)" stroke="#4b4e4b" strokeWidth="1.800" />
    <path d="M1027 336q17-4 35 0M1044 331v3M1044 312v4" stroke="#4b4e4b" strokeWidth="1.500" />
    <rect x="1040" y="316" width="8" height="15" rx="4" fill="#f6f8f6" stroke="#333" strokeWidth="1.600" />
    <g strokeWidth="1">
      <path d="M274 664 268 659" stroke="#4cae4c" /><path d="M274 664l14-4" stroke="#33337c" /><path d="M274 664l1 12" stroke="#a66" />
      <circle cx="268" cy="659" r="3.500" fill="#0b8a1a" /><path d="m285 656 8 3-6 5z" fill="#0c0c7a" stroke="#0c0c7a" />
      <path d="M271 677q0-3 4-3t4 3l-4 6z" fill="#b00d0d" />
    </g>
    <text x="293" y="661">Z</text>
    <text x="260" y="657" style={{ fill: "#3cc23c" }}>Y</text>
    <text x="272" y="689" style={{ fill: "#c82a2a" }}>X</text>
    <g stroke="#8e918e" strokeWidth=".8" strokeDasharray="5 2">
      <path d="m1145 143 29-7 18 11-32 9z" fill="#eceeec" />
      <path d="m1145 143 15 13 2 31-14-15z" fill="#e3e5e3" />
      <path d="m1160 156 32-9-1 31-29 9z" fill="#e8eae8" />
    </g>
    <g style={{ fontWeight: 700 }}>
      <text transform="matrix(.95 -.26 .5 .75 1160 149)" style={{ fill: "#949794", fontSize: 7 }}>LEFT</text>
      <text transform="matrix(0 -1 .95 -.26 1180 181)" style={{ fill: "#7e817e", fontSize: 7 }}>BOTTOM</text>
      <text transform="matrix(.1 1 -.7 -.7 1151 154)" style={{ fill: "#949794", fontSize: 6 }}>BACK</text>
    </g>
  </Scene>
);

const NavIcons = () => (
  <svg width="22" height="159" viewBox="0 0 22 159" fill="none" stroke="#9a9d9a">
    <circle cx="17" cy="4" r="2" /><circle cx="17" cy="154" r="2" />
    <path d="M4 22q0-8 8-8 7 0 7 7t-7 8q-8 0-8-7z" /><circle cx="11.500" cy="21.500" r="5" fill="#e2edf8" stroke="#a4b4c8" />
    <path d="M2 42h18" stroke="#b0b4b0" />
    <path d="m7 51-1-3 2 2v-4l2 3 1-4 1 4 3-2-1 4 1 2-3 4H9l-4-5z" />
    <circle cx="10" cy="67" r="4" fill="#edf2f7" /><path d="m13 70 4 4" strokeWidth="2" />
    <path d="M5 92q6 4 12 0M11 86v11M8 88q3-4 6 0M17 90l2 3-4 1" />
    <path d="M6 113h11v8H6zM8 115h7v4H8zM5 111l3-2h8" />
    <circle cx="9" cy="130" r="4" fill="#cfe4f8" stroke="#86a9cc" /><path d="M11 134h5v-6h-4M9 134q4 5 8-1" />
    <path d="M9.500 37h4l-2 2zM9.500 80h4l-2 2zM9.500 104h4l-2 2zM9.500 144h4l-2 2z" fill="#888" stroke="none" />
  </svg>
);

const LoftDialog = () => (
  <Dialog role="dialog" aria-label="Loft">
    <DialogTitle>
      <h2>Loft</h2>
      <PlainButton aria-label="Close"><Icon n="dx" s={9} /></PlainButton>
    </DialogTitle>
    <DialogTabs>
      <DialogTab $on>Curves</DialogTab>
      <DialogTab>Conditions</DialogTab>
      <DialogTab>Transition</DialogTab>
    </DialogTabs>
    <Curves>
      <ModeList>
        {["sec", "sec", "sec", "multi"].map((n, i) => (
          <ModeButton key={i} aria-label={`Section mode ${i + 1}`}><Icon n={n} /></ModeButton>
        ))}
      </ModeList>
      <ListBox>
        <ListPointer width="7" height="12" viewBox="0 0 7 12"><path d="M1 1v8l2-2 1 4 1-1-1-3h2z" fill="#fff" stroke="#222" strokeWidth=".9" /></ListPointer>
        <ListHead>Sections</ListHead>
        <ListItem $link>Edges1</ListItem>
        <ListHint>Click to add</ListHint>
      </ListBox>
      <RadioList>
        {["Rails", "Center line", "Area loft"].map((l, i) => (
          <RadioRow key={l}>
            <Radio type="radio" name="control" aria-label={l} defaultChecked={i === 0} />
            <RailGlyph kind={i} />
          </RadioRow>
        ))}
      </RadioList>
      <ListBox>
        <ListHead>Rails</ListHead>
        <ListItem>Select a sketch</ListItem>
        <ListHint>Click to add</ListHint>
        <ClickRing />
      </ListBox>
    </Curves>
    <Options>
      <Solids><ModeButton><Icon n="arrow" /></ModeButton>Solids</Solids>
      <Output>
        <OutputTitle>Output</OutputTitle>
        <OutputButton aria-label="Solid"><Icon n="solid" s={13} /></OutputButton>
        <OutputButton $on aria-label="Surface"><Icon n="surface" s={13} /></OutputButton>
      </Output>
      <Checks>
        <CheckRow><Check type="checkbox" />Closed Loop</CheckRow>
        <CheckRow><Check type="checkbox" />Merge Tangent Faces</CheckRow>
      </Checks>
    </Options>
    <DialogFooter>
      <HelpButton aria-label="Help"><Icon n="helpbox" /></HelpButton>
      <Preview>
        <Check type="checkbox" defaultChecked aria-label="Preview" />
        <svg width="21" height="11" viewBox="0 0 21 11" fill="none" stroke="#333">
          <path d="M1 5q0-4 4-4M1 5h7q1 4-3 5-4-1-4-5zM8 5q2-1 3 0h7q0 4-3 5-4-1-4-5M18 5l2-4-3 1" />
        </svg>
      </Preview>
      <DialogButton disabled>OK</DialogButton>
      <DialogButton>Cancel</DialogButton>
    </DialogFooter>
  </Dialog>
);

export default function App() {
  return (
    <Page>
      <Global />
      <AppWindow>
        <TitleBar>
          <ToolGroup $start={1}><Tool n="logo" label="Inventor" /></ToolGroup>
          <ToolGroup $start={7}>
            <Tool n="newFile" label="New" /><Caret />
            <Tool n="open" label="Open" />
            <Tool n="save" label="Save" />
            <Tool n="undo" label="Undo" /><Caret $tone="#8b8f8a" />
            <Tool n="redo" label="Redo" /><Caret $tone="#8b8f8a" />
            <Tool n="home" label="Home" />
            <Tool n="sheet" label="Drawing" />
            <Tool n="team" label="Team" /><Caret />
            <Tool n="pick" label="Select" /><Caret />
            <Tool n="dots" label="Update" />
            <Tool n="ball" label="Material browser" />
          </ToolGroup>
          <SelectWrap>
            <BarSelect aria-label="Material" defaultValue="Generic"><option>Generic</option></BarSelect>
            <Caret $tone="#333" />
          </SelectWrap>
          <Tool n="wheel" label="Appearance browser" />
          <SelectWrap>
            <BarSelect aria-label="Appearance" $inset={14}><option>Default</option></BarSelect>
            <svg width="10" height="10" viewBox="0 0 10 10"><circle cx="5" cy="5" r="5" fill="#777a77" /><circle cx="4" cy="3.500" r="3" fill="#d6d8d6" /></svg>
            <Caret $tone="#333" />
          </SelectWrap>
          <ToolGroup $start={1}>
            <Tool n="wheelT" label="Adjust" />
            <Tool n="wheelX" label="Clear" />
            <Tool n="fx" label="Parameters" />
            <Tool n="plus" label="Measure" />
            <Tool n="more" label="Customize" />
          </ToolGroup>
          <Title><span>Autodesk Inventor Professional 2018</span><span>Part3 (1).ipt</span></Title>
          <ToolGroup>
            <svg width="3" height="6" viewBox="0 0 3 6"><path d="M0 0l3 3-3 3z" fill="#ddd" /></svg>
            <SearchBox aria-label="Search" placeholder="Search Help &amp; Commands..." />
            <Tool n="dish" label="Communication" />
            <Tool n="star" label="Favorites" />
            <Tool n="user" label="Account" />
            <UserName>kelly.young</UserName>
            <Caret />
          </ToolGroup>
          <ToolGroup $gap={6} $start={3}>
            <Tool n="cart" label="Store" />
            <Rule />
            <Tool n="help" label="Help" />
            <Caret />
          </ToolGroup>
          <ToolGroup $gap={5} $start={9}>
            <Tool n="min" label="Minimize" />
            <Tool n="max" label="Maximize" />
            <Tool n="close" label="Close window" />
          </ToolGroup>
        </TitleBar>

        <TabBar>
          <RibbonTab $kind="file">File</RibbonTab>
          <RibbonTab>Factory</RibbonTab>
          <RibbonTab $kind="active">3D Model</RibbonTab>
          {tabs.map((t) => <RibbonTab key={t}>{t}</RibbonTab>)}
          <ToolGroup $start={18}><Pill /><Caret /></ToolGroup>
        </TabBar>

        <Ribbon>
          <Panel $w={55}>
            <PanelBody>
              <BigButton $w={54}>
                <Icon n="sketch2d" s={22} />
                <span>Start</span>
                <SideCaretLine>2D Sketch<Caret $tone="#444" /></SideCaretLine>
              </BigButton>
            </PanelBody>
            <PanelTitle>Sketch</PanelTitle>
          </Panel>
          <Panel $w={207}>
            <PanelBody>
              <Big w={33} n="extrude" lines={["Extrude"]} />
              <Big w={32} n="revolve" lines={["Revolve"]} />
              <Items w={46} items={[{ n: "sweep", t: "Sweep" }, { n: "loft", t: "Loft", on: true }, { n: "coil", t: "Coil" }]} />
              <Items w={49} items={[{ n: "emboss", t: "Emboss" }, { n: "derive", t: "Derive" }, { n: "rib", t: "Rib" }]} />
              <Items w={46} items={[{ n: "decal", t: "Decal" }, { n: "import", t: "Import" }]} />
            </PanelBody>
            <PanelTitle>Create</PanelTitle>
          </Panel>
          <Panel $w={251} $start={2}>
            <PanelBody>
              <Big w={27} n="hole" lines={["Hole"]} />
              <Big w={27} n="fillet" lines={["Fillet"]} />
              <Items w={53} items={[{ n: "chamfer", t: "Chamfer" }, { n: "shell", t: "Shell" }, { n: "draft", t: "Draft" }]} />
              <Items w={78} items={[{ n: "thread", t: "Thread" }, { n: "combine", t: "Combine" }, { n: "thicken", t: "Thicken/ Offset" }]} />
              <Items w={62} items={[{ n: "split", t: "Split" }, { n: "direct", t: "Direct" }, { n: "delface", t: "Delete Face" }]} />
            </PanelBody>
            <PanelTitle>Modify <Caret $tone="#333" /></PanelTitle>
          </Panel>
          <Panel $w={44}>
            <PanelBody><Big w={43} n="shapegen" lines={["Shape", "Generator"]} /></PanelBody>
            <PanelTitle>Explore</PanelTitle>
          </Panel>
          <Panel $w={88}>
            <PanelBody>
              <Big w={38} n="plane" lines={["Plane"]} caret />
              <Items w={49} items={[{ n: "axis", t: "Axis", caret: true }, { n: "point", t: "Point", caret: true }, { n: "ucs", t: "UCS" }]} />
            </PanelBody>
            <PanelTitle>Work Features</PanelTitle>
          </Panel>
          <Panel $w={38} $start={2}>
            <PanelBody>
              <IconGrid>
                <IconButton aria-label="Rectangular"><Icon n="rect" /></IconButton>
                <IconButton aria-label="Mirror"><Icon n="mirror" /></IconButton>
                <IconButton aria-label="Circular"><Icon n="circ" /></IconButton><span />
                <IconButton aria-label="Sketch driven"><Icon n="skpat" /></IconButton>
              </IconGrid>
            </PanelBody>
            <PanelTitle>Pattern</PanelTitle>
          </Panel>
          <Panel $w={82}>
            <PanelBody>
              <Big w={31} n="freebox" lines={["Box"]} caret />
              <Items w={48} items={[{ n: "face", t: "Face" }, { n: "convert", t: "Convert" }]} />
            </PanelBody>
            <PanelTitle>Create Freeform</PanelTitle>
          </Panel>
          <Panel $w={111} $start={2}>
            <PanelBody>
              <Items w={44} items={[{ n: "stitch", t: "Stitch" }, { n: "patch", t: "Patch" }, { n: "sculpt", t: "Sculpt" }]} />
              <Column $w={46}>
                <IconButton aria-label="Ruled surface"><Icon n="ruled" /></IconButton>
                <SmallButton><Icon n="trim" />Trim</SmallButton>
                <SmallButton><Icon n="extend" />Extend</SmallButton>
              </Column>
              <Column $w={17}>
                <IconButton aria-label="Replace face"><Icon n="rep" /></IconButton>
                <IconButton aria-label="Repair bodies"><Icon n="repair" /></IconButton>
                <IconButton aria-label="Copy object"><Icon n="copyobj" /></IconButton>
              </Column>
            </PanelBody>
            <PanelTitle>Surface</PanelTitle>
          </Panel>
          <Panel $w={98} $start={2}>
            <PanelBody>
              <Items w={38} items={[{ n: "grill", t: "Grill" }, { n: "boss", t: "Boss" }, { n: "rest", t: "Rest" }]} />
              <Items w={56} items={[{ n: "snap", t: "Snap Fit" }, { n: "rfillet", t: "Rule Fillet" }, { n: "lip", t: "Lip" }]} />
            </PanelBody>
            <PanelTitle>Plastic Part</PanelTitle>
          </Panel>
          <Panel $w={47}>
            <PanelBody><Big w={46} n="stress" lines={["Stress", "Analysis"]} /></PanelBody>
            <PanelTitle>Simulation</PanelTitle>
          </Panel>
          <Panel $w={51}>
            <PanelBody><Big w={50} n="sheetm" lines={["Convert to", "Sheet Metal"]} /></PanelBody>
            <PanelTitle>Convert</PanelTitle>
          </Panel>
          <Panel $w={36}>
            <PanelBody><Big w={35} n="print3d" lines={["3D Print"]} /></PanelBody>
            <PanelTitle>3D Print</PanelTitle>
          </Panel>
          <RibbonEnd>
            <IconButton $w={24} aria-label="Ribbon options"><Icon n="drop" s={11} /><Caret $tone="#444" /></IconButton>
          </RibbonEnd>
        </Ribbon>

        <Workspace>
          <Sidebar>
            <PaneHeader>
              <PaneTab>iLogic <Icon n="x" s={7} /></PaneTab>
              <Icon n="add" s={7} />
              <Spacer />
              <Icon n="menu" s={9} />
            </PaneHeader>
            <LogicPane>
              <LogicHead>
                <LogicTabs>
                  <LogicTab>Rules</LogicTab>
                  <LogicTab $on>Forms</LogicTab>
                  <LogicTab>Global Forms</LogicTab>
                  <LogicTab>External</LogicTab>
                </LogicTabs>
                <LogicArrow aria-label="Previous"><svg width="3" height="5" viewBox="0 0 3 5"><path d="M3 0v5L0 2.500z" fill="#222" /></svg></LogicArrow>
                <LogicArrow aria-label="Next"><svg width="3" height="5" viewBox="0 0 3 5"><path d="M0 0v5l3-2.500z" fill="#222" /></svg></LogicArrow>
              </LogicHead>
              <LogicBody />
            </LogicPane>
            <Divider />
            <PaneHeader>
              <PaneTab>Model <Icon n="x" s={7} /></PaneTab>
              <Icon n="add" s={7} />
              <Spacer />
              <ToolGroup $gap={7}><Icon n="search" s={9} /><Icon n="menu" s={9} /></ToolGroup>
            </PaneHeader>
            <Tree>
              <TreeRow $root><Icon n="part" />Part3 (1).ipt</TreeRow>
              {tree.map((r) => (
                <TreeRow key={r.t}>
                  <Twist>
                    {r.more && <svg width="4" height="6" viewBox="0 0 4 6"><path d="M0 0l3 3-3 3" fill="none" stroke="#777" /></svg>}
                  </Twist>
                  <Icon n={r.n} s={11} />{r.t}
                </TreeRow>
              ))}
            </Tree>
          </Sidebar>
          <Viewport>
            <Model />
            <DocButtons>
              <PlainButton aria-label="Minimize document"><Icon n="wmin" s={8} /></PlainButton>
              <PlainButton aria-label="Restore document"><Icon n="wrest" s={8} /></PlainButton>
              <PlainButton aria-label="Close document"><Icon n="wclose" s={8} /></PlainButton>
            </DocButtons>
            <NavBar><NavIcons /></NavBar>
            <LoftDialog />
          </Viewport>
        </Workspace>

        <StatusBar>
          <span>Select a sketch</span>
          <Spacer />
          <StatusCell $w={28}>1</StatusCell>
          <StatusCell $w={26}>1/1</StatusCell>
          <GripCell $w={14}>
            <svg width="6" height="6" viewBox="0 0 6 6"><path d="M4 0h1v1H4zM2 2h1v1H2zM4 2h1v1H4zM0 4h1v1H0zM2 4h1v1H2zM4 4h1v1H4z" fill="#a9aca9" /></svg>
          </GripCell>
        </StatusBar>
      </AppWindow>
    </Page>
  );
}
